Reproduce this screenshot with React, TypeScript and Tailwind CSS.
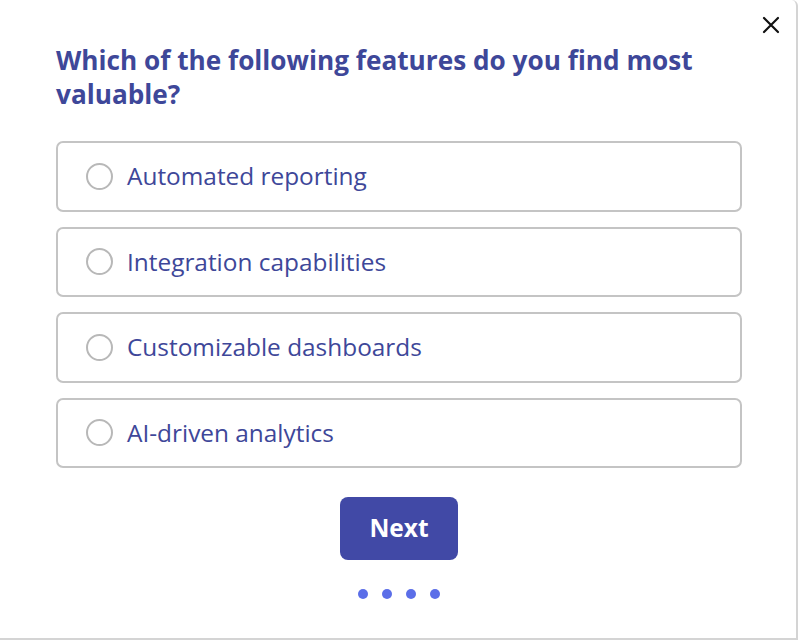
import React from "react";

const options = [
  "Automated reporting",
  "Integration capabilities",
  "Customizable dashboards",
  "AI-driven analytics",
];

export default function App() {
  return (
    <div
      className="w-[800px] h-[641px] bg-white"
      style={{ fontFamily: '"Open Sans", sans-serif' }}
    >
      <div className="relative w-[798px] h-[640px] bg-white border-r-2 border-b-2 border-[#d4d4d4] rounded-tr-[6px] pt-[43px] pl-[56px] pr-[56px]">
        <button className="absolute right-[16px] top-[16px] w-[18px] h-[18px] flex items-center justify-center">
          <svg width="18" height="18" viewBox="0 0 18 18" fill="none">
            <path d="M2 2L16 16M16 2L2 16" stroke="#111" strokeWidth="2.2" strokeLinecap="round" />
          </svg>
        </button>
        <h1 className="text-[26.2px] leading-[34px] font-bold text-[#3e4799] w-[680px]">
          Which of the following features do you find most valuable?
        </h1>
        <div className="mt-[30px] flex flex-col gap-[15px] w-[686px]">
          {options.map((o) => (
            <label
              key={o}
              className="h-[70.5px] border-2 border-[#c4c4c4] rounded-[7px] flex items-center pl-[28px] gap-[14px]"
            >
              <span className="w-[27px] h-[27px] rounded-full border-2 border-[#b8b8b8] bg-white shrink-0" />
              <span className="text-[24.4px] text-[#3e4799] leading-none">{o}</span>
            </label>
          ))}
        </div>
        <div className="flex justify-center mt-[29px] w-[686px]">
          <button className="w-[118px] h-[63px] rounded-[8px] bg-[#4149a6] text-white text-[24.5px] font-bold">
            Next
          </button>
        </div>
        <div className="flex justify-center gap-[14px] mt-[29px] w-[686px]">
          {[0, 1, 2, 3].map((i) => (
            <span key={i} className="w-[10px] h-[10px] rounded-full bg-[#5b6ee8]" />
          ))}
        </div>
      </div>
    </div>
  );
}
